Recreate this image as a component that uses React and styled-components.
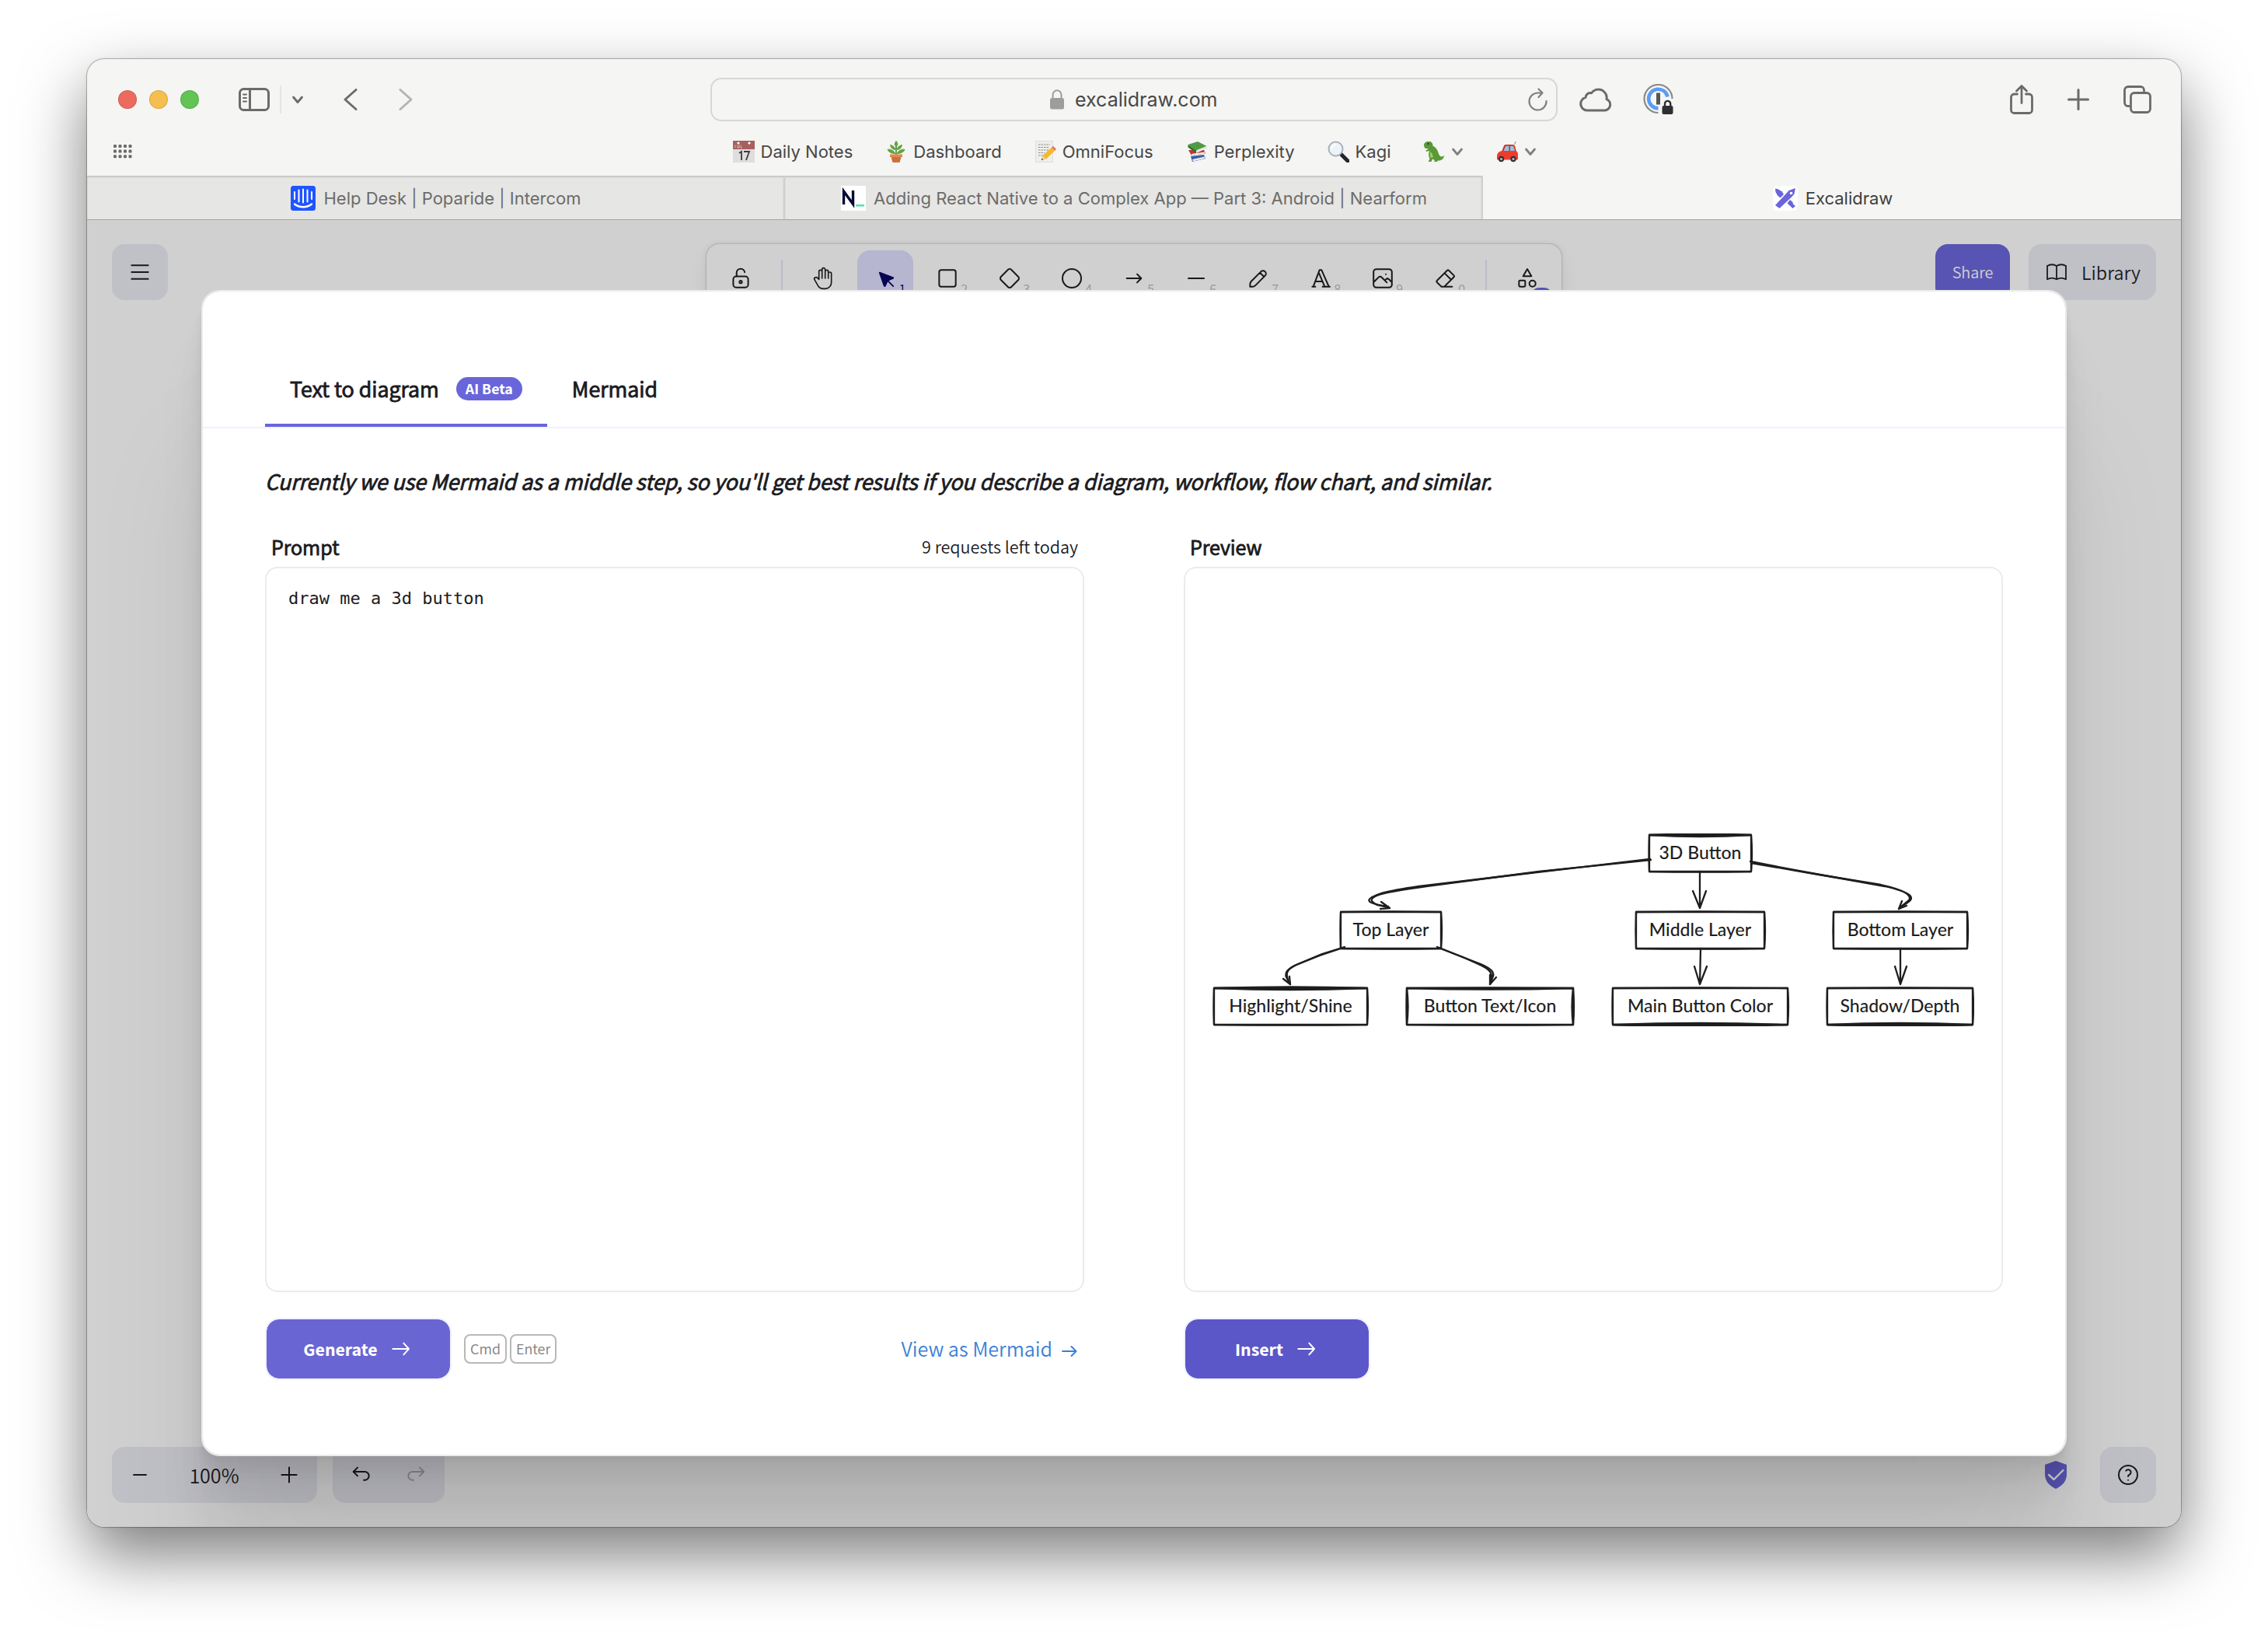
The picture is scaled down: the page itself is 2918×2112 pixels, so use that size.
import React from "react";
import styled, { createGlobalStyle, css } from "styled-components";

const ui = `Inter, "Liberation Sans", sans-serif`;
const brand = `Assistant, "Noto Sans CJK SC", "Open Sans", sans-serif`;
const mono = `"DejaVu Sans Mono", "Liberation Mono", monospace`;
const hand = `Excalifont, Lato, sans-serif`;

const GlobalStyle = createGlobalStyle`
  *, *::before, *::after { box-sizing: border-box; }
  body { margin: 0; background: #fff; font-family: ${ui}; }
  button, input, textarea { font: inherit; color: inherit; margin: 0; padding: 0; border: 0; background: none; }
  a { color: inherit; text-decoration: none; }
  svg { display: block; flex: none; }
`;

/* Adds a little ink so that the regular cut reads as a medium weight. */
const medium = css`
  -webkit-text-stroke: 1px currentColor;
  paint-order: stroke fill;
`;

/* ---------- window ---------- */

const Page = styled.div`
  min-height: 100vh;
  padding: 76px 112px 148px;
  display: flex;
  flex-direction: column;
`;

const Window = styled.div`
  flex: 1;
  display: flex;
  flex-direction: column;
  border-radius: 22px;
  background: #f5f5f3;
  box-shadow: 0 0 0 1px rgba(0, 0, 0, 0.24), 0 0 4px rgba(0, 0, 0, 0.1), 0 36px 84px rgba(0, 0, 0, 0.52);
`;

const Chrome = styled.header`
  color: #6b6b69;
`;

const TitleBar = styled.div`
  display: grid;
  grid-template-columns: minmax(0, 1fr) minmax(400px, 1090px) minmax(0, 1fr);
  align-items: center;
  height: 104px;
`;

const TitleSide = styled.div`
  display: flex;
  align-items: center;
  justify-content: space-between;
  padding: ${(p) => (p.$end ? "0 38px 0 28px" : "0 0 0 40px")};
`;

const Cluster = styled.div`
  display: flex;
  align-items: center;
  gap: ${(p) => p.$gap}px;
`;

const Light = styled.button`
  width: 24px;
  height: 24px;
  border-radius: 50%;
  background: ${(p) => p.$color};
  box-shadow: inset 0 0 0 1px rgba(0, 0, 0, 0.12);
`;

const IconButton = styled.button`
  display: flex;
  color: ${(p) => p.$color || "inherit"};
`;

const Divider = styled.span`
  width: 2px;
  height: 36px;
  background: #e4e4e2;
`;

const AddressBar = styled.form`
  display: grid;
  grid-template-columns: 1fr auto 1fr;
  align-items: center;
  height: 56px;
  padding: 0 10px;
  border: 2px solid #d7d7d5;
  border-radius: 14px;
`;

const Address = styled.label`
  grid-column: 2;
  display: flex;
  align-items: center;
  gap: 14px;
  color: #9d9d9b;
`;

const AddressInput = styled.input`
  width: 184px;
  font-size: 25px;
  line-height: 32px;
  color: #484846;
  outline: none;
`;

const Reload = styled(IconButton)`
  justify-self: end;
  color: #80807e;
`;

const BookmarkBar = styled.nav`
  display: grid;
  grid-template-columns: 1fr auto 1fr;
  align-items: center;
  padding: 0 32px 16px 34px;
`;

const Bookmarks = styled.div`
  display: flex;
  gap: 42px;
`;

const Bookmark = styled.a`
  display: flex;
  align-items: center;
  gap: 8px;
  height: 30px;
  font-size: 22px;
  line-height: 30px;
  color: ${(p) => (p.$folder ? "#80807e" : "#474745")};
`;

const Tabs = styled.div`
  display: grid;
  grid-template-columns: repeat(3, 1fr);
  height: 57px;
  border-bottom: 1px solid #a5a5a5;
`;

const BrowserTab = styled.button`
  display: flex;
  align-items: center;
  justify-content: center;
  gap: 10px;
  padding: 2px 0 0 2px;
  font-size: 22px;
  line-height: 30px;
  ${(p) =>
    p.$active
      ? css`
          color: #3f3f3e;
        `
      : css`
          color: #6c6c6a;
          background: #e6e6e4;
          border-right: 2px solid #d0d0ce;
          box-shadow: inset 0 2px 2px rgba(0, 0, 0, 0.14);
        `}
`;

/* ---------- canvas behind the dialog ---------- */

const Viewport = styled.main`
  position: relative;
  flex: 1;
  display: flex;
  flex-direction: column;
  overflow: hidden;
  border-radius: 0 0 22px 22px;
  background: #fff;
  font-family: ${brand};
  color: #1b1b1f;
`;

const Canvas = styled.div`
  flex: 1;
  display: flex;
  flex-direction: column;
  justify-content: space-between;
  padding: 31px 32px;
`;

const TopBar = styled.div`
  display: grid;
  grid-template-columns: 1fr auto 1fr;
  align-items: start;
`;

const Tile = styled.button`
  display: flex;
  align-items: center;
  justify-content: center;
  width: ${(p) => (p.$wide ? "164px" : "72px")};
  height: 72px;
  gap: 16px;
  border-radius: 16px;
  background: #ececf4;
  font-size: 26px;
`;

const TopActions = styled.div`
  display: flex;
  justify-content: flex-end;
  gap: 24px;
`;

const ShareButton = styled.button`
  width: 96px;
  height: 72px;
  border-radius: 16px;
  background: #6965db;
  color: #fff;
  font-size: 22px;
`;

const ToolIsland = styled.div`
  display: flex;
  align-items: center;
  gap: 8px;
  padding: 8px;
  border-radius: 16px;
  background: #fff;
  box-shadow: 0 0 2px rgba(0, 0, 0, 0.34), 0 0 6px rgba(0, 0, 0, 0.1), 0 14px 28px rgba(0, 0, 0, 0.06);
`;

const ToolDivider = styled.span`
  width: 2px;
  height: 48px;
  margin: 0 8px;
  background: #e5e4f7;
`;

const Tool = styled.button`
  position: relative;
  display: flex;
  align-items: center;
  justify-content: center;
  width: 72px;
  height: 72px;
  border-radius: 16px;
  color: ${(p) => (p.$active ? "#030064" : "#1b1b1f")};
  background: ${(p) => (p.$active ? "#e0dfff" : "transparent")};
`;

const ToolKey = styled.span`
  position: absolute;
  right: 10px;
  bottom: 12px;
  font-size: 18px;
  line-height: 20px;
  color: ${(p) => (p.$active ? "#030064" : "#b8b8b8")};
`;

const ToolBadge = styled.span`
  position: absolute;
  right: 4px;
  bottom: 4px;
  padding: 0 8px;
  border-radius: 10px;
  background: #6965db;
  color: #fff;
  font-size: 14px;
  line-height: 20px;
`;

const BottomBar = styled.div`
  display: flex;
  justify-content: space-between;
  align-items: center;
`;

const Pill = styled.div`
  display: flex;
  align-items: center;
  border-radius: 16px;
  background: #ececf4;
`;

const PillButton = styled.button`
  display: flex;
  align-items: center;
  justify-content: center;
  width: 72px;
  height: 72px;
  opacity: ${(p) => (p.disabled ? 0.3 : 1)};
`;

const ZoomValue = styled.button`
  width: 120px;
  font-size: 28px;
  text-align: center;
`;

/* ---------- dialog ---------- */

const Overlay = styled.div`
  position: absolute;
  inset: 0;
  display: flex;
  padding: 90px 147px 91px;
  background: rgba(18, 18, 18, 0.2);
`;

const Dialog = styled.section`
  flex: 1;
  display: flex;
  flex-direction: column;
  border: 2px solid #ebebeb;
  background-clip: padding-box;
  border-radius: 24px;
  background-color: #fff;
  padding-top: 80px;
  box-shadow: 0 200px 160px rgba(0, 0, 0, 0.07), 0 84px 67px rgba(0, 0, 0, 0.05), 0 45px 36px rgba(0, 0, 0, 0.042),
    0 25px 20px rgba(0, 0, 0, 0.035), 0 13px 11px rgba(0, 0, 0, 0.028), 0 6px 4px rgba(0, 0, 0, 0.02);
`;

const DialogTabs = styled.div`
  display: flex;
  padding: 0 80px;
  border-bottom: 2px solid #f1f0ff;
`;

const DialogTab = styled.button`
  display: flex;
  align-items: center;
  gap: 22px;
  height: 94px;
  padding: 0 32px;
  border-bottom: 4px solid ${(p) => (p.$active ? "#6965db" : "transparent")};
  font-size: 30px;
`;

const TabLabel = styled.span`
  ${medium}
`;

const Beta = styled.span`
  padding: 0 12px;
  border-radius: 15px;
  background: #6965db;
  color: #fff;
  font-size: 20px;
  font-weight: 700;
  line-height: 30px;
`;

const DialogBody = styled.div`
  flex: 1;
  display: flex;
  flex-direction: column;
  padding: 48px 80px 96px;
`;

const Hint = styled.p`
  margin: 0 0 45px;
  font-size: 30px;
  line-height: 40px;
  font-style: italic;
  ${medium}
`;

const Panels = styled.div`
  flex: 1;
  display: grid;
  grid-template-columns: 1fr 1fr;
  gap: 128px;
`;

const Panel = styled.div`
  display: flex;
  flex-direction: column;
`;

const PanelHead = styled.div`
  display: flex;
  justify-content: space-between;
  align-items: center;
  height: 45px;
  padding: 0 8px 7px;
  font-size: 24px;
`;

const PanelTitle = styled.label`
  font-size: 28px;
  font-weight: 400;
  ${medium}
`;

const frame = css`
  flex: 1;
  border: 2px solid #ebebeb;
  border-radius: 16px;
`;

const Prompt = styled.textarea`
  ${frame}
  padding: 24px 28px;
  resize: none;
  outline: none;
  font-family: ${mono};
  font-size: 22px;
  line-height: 30px;
`;

const Preview = styled.div`
  ${frame}
  display: flex;
  align-items: center;
  justify-content: center;
  padding: 34px;
`;

const PanelFoot = styled.div`
  display: flex;
  align-items: center;
  gap: 16px;
  padding-top: 33px;
`;

const Primary = styled.button`
  display: flex;
  align-items: center;
  justify-content: center;
  gap: 14px;
  width: 240px;
  height: 80px;
  border: 2px solid #f1f0ff;
  border-radius: 18px;
  background: ${(p) => (p.$deep ? "#5b57c9" : "#6965d3")};
  background-clip: padding-box;
  color: #fff;
  font-size: 24px;
  font-weight: 700;
`;

const Keys = styled.div`
  display: flex;
  gap: 4px;
`;

const Key = styled.kbd`
  padding: 0 6px;
  border: 2px solid #b8b8b8;
  border-radius: 8px;
  font-family: ${brand};
  font-size: 20px;
  line-height: 34px;
  color: #808080;
`;

const MermaidLink = styled.a`
  display: flex;
  align-items: center;
  gap: 12px;
  margin-left: auto;
  padding-right: 9px;
  font-size: 28px;
  line-height: 40px;
  color: #3b7fd6;
`;

const Diagram = styled.svg`
  width: 100%;
  max-width: 980px;
  height: auto;
  color: #1e1e1e;
`;

const NodeLabel = styled.text`
  font-family: ${hand};
  font-size: 23px;
  font-weight: 500;
  text-anchor: middle;
  fill: currentColor;
`;

/* ---------- icons ---------- */

function Glyph({ box = 24, size = 32, width = 1.5, children, ...rest }) {
  return (
    <svg
      viewBox={`0 0 ${box} ${box}`}
      width={size}
      height={size}
      fill="none"
      stroke="currentColor"
      strokeWidth={width}
      strokeLinecap="round"
      strokeLinejoin="round"
      aria-hidden="true"
      {...rest}
    >
      {children}
    </svg>
  );
}

function Line({ w, h, sw = 3, d, children }) {
  return (
    <svg
      viewBox={`0 0 ${w} ${h}`}
      width={w}
      height={h}
      fill="none"
      stroke="currentColor"
      strokeWidth={sw}
      strokeLinecap="round"
      strokeLinejoin="round"
      aria-hidden="true"
    >
      {d && <path d={d} />}
      {children}
    </svg>
  );
}

const ChevronDown = () => <Line w={16} h={12} sw={2.8} d="M2.500 3l5.500 6.500L13.500 3" />;

const Arrow = ({ size = 32 }) => (
  <Glyph box={24} size={size} width={1.5}>
    <path d="M4 12h15.500M14.500 6.500l5 5.500-5 5.500" />
  </Glyph>
);

const SmallArrow = () => <Line w={20} h={28} sw={2} d="M1 17h17M12.500 11l6 6-6 6" />;

const SidebarIcon = () => (
  <Line w={40} h={30} sw={3}>
    <rect x="1.500" y="1.500" width="37" height="27" rx="5" />
    <path d="M14.500 2v26" />
    <path d="M6 8.500h4M6 13h4M6 17.500h4" strokeWidth="2" />
  </Line>
);

const AppsIcon = () => (
  <svg viewBox="0 0 24 18" width="24" height="18" fill="currentColor" aria-hidden="true">
    {[0, 1, 2].flatMap((r) =>
      [0, 1, 2, 3].map((c) => <rect key={`${r}${c}`} x={c * 6.5} y={r * 6.6} width="4" height="4" rx="1.200" />)
    )}
  </svg>
);

const LockIcon = () => (
  <svg viewBox="0 0 18 26" width="18" height="26" fill="none" stroke="currentColor" aria-hidden="true">
    <rect x="0" y="11" width="18" height="14.500" rx="2.500" fill="currentColor" stroke="none" />
    <path d="M3.500 12V7a5.500 5.700 0 0 1 11 0v5" strokeWidth="2" />
  </svg>
);

const ReloadIcon = () => <Line w={26} h={30} sw={2.2} d="M23.500 17A11 11 0 1 1 12.500 6.500h5M13.500 1.500l5 5-5 5.500" />;

const CloudIcon = () => (
  <Line w={42} h={32} d="M10 30a8.500 8.500 0 0 1-2-16.700 6 6 0 0 1 7.500-5.500A10.700 10.700 0 0 1 35 15.600 7.500 7.500 0 0 1 33 30z" />
);

const PasswordIcon = () => (
  <svg viewBox="0 0 40 40" width="40" height="40" fill="none" aria-hidden="true">
    <path d="M37.500 19A18 18 0 1 0 19.500 37" stroke="#8a8a89" strokeWidth="2.200" />
    <path d="M31.500 16.500A12.300 12.300 0 1 0 19.500 31.300" stroke="#5b9df5" strokeWidth="4.600" />
    <rect x="17" y="11.500" width="5" height="15" fill="#555" />
    <rect x="24.500" y="28" width="14" height="11" rx="2" fill="#2f2f2f" />
    <path d="M28 29v-3.500a3.600 3.600 0 0 1 7.200 0V29" stroke="#2f2f2f" strokeWidth="2.400" />
  </svg>
);

const ShareIcon = () => (
  <Line w={30} h={38} sw={2.8} d="M9.500 12H5.500a4 4 0 0 0-4 4v16.500a4 4 0 0 0 4 4h19a4 4 0 0 0 4-4V16a4 4 0 0 0-4-4h-4M15 23.500V2M8.500 8L15 1.500 21.500 8" />
);

const PlusIcon = () => <Line w={28} h={28} d="M14 1.500v25M1.500 14h25" />;

const TabsIcon = () => (
  <Line w={36} h={36} sw={2.8}>
    <rect x="9.500" y="9.500" width="25" height="25" rx="4.500" />
    <path d="M7 26.500H6A4.500 4.500 0 0 1 1.500 22V6A4.500 4.500 0 0 1 6 1.500h16A4.500 4.500 0 0 1 26.500 6v1" />
  </Line>
);

const Emoji = ({ children }) => (
  <svg viewBox="0 0 28 28" width="28" height="28" aria-hidden="true">
    {children}
  </svg>
);

const Calendar = () => (
  <Emoji>
    <rect x="0" y="0" width="28" height="28" fill="#dedede" />
    <rect x="0" y="0" width="28" height="11" fill="#a8605f" />
    <circle cx="7" cy="3" r="1.600" fill="#fff" />
    <circle cx="21" cy="3" r="1.600" fill="#fff" />
    <path d="M3 5.500v3.500M6 5.500v3.500h2V5.500M10 5.500v3.500h2" stroke="#d9b3b2" fill="none" />
    <path d="M8 16l3-2v11M14 14h7l-4 11" stroke="#3c3c3c" strokeWidth="1.800" fill="none" />
  </Emoji>
);

const Plant = () => (
  <Emoji>
    <path d="M14 19V4" stroke="#4c8a35" strokeWidth="1.600" />
    <path d="M14 8c-3-2-3-5 0-8 3 3 3 6 0 8zM13.500 12C9 12 6.500 9 6 5c4 .5 7 3 7.500 7zM14.500 12c4.500 0 7-3 7.500-7-4 .5-7 3-7.500 7zM13.500 17C8 17 4 15 2.500 11c5-1 9 1.500 11 6zM14.500 17c5.500 0 9.500-2 11-6-5-1-9 1.500-11 6z" fill="#63a544" />
    <path d="M6 17.500h16v3.500H6z" fill="#e2894f" />
    <path d="M7.500 21h13L18.500 28h-9z" fill="#c9713c" />
  </Emoji>
);

const Memo = () => (
  <Emoji>
    <rect x="1.500" y="0.500" width="22" height="27" fill="#eeeeec" stroke="#dededc" />
    <path d="M5 5h15M5 8.500h13M5 12h14M5 15.500h8M5 19h6" stroke="#8e8e8c" strokeWidth="1.200" strokeDasharray="2.500 1" />
    <path d="M9 25l1.500-6L22 8.500l4.500 4L15 23.500z" fill="#f3b92f" />
    <path d="M22 8.500l2-1.500 4 4-1.500 1.500z" fill="#e0647a" />
    <path d="M9 25l1.500-6 4.500 4.500z" fill="#e8cfa2" />
    <path d="M9 25l.6-2.200 1.600 1.600z" fill="#333" />
  </Emoji>
);

const Books = () => (
  <Emoji>
    <path d="M6 20l17-2 2 5-17 4z" fill="#3b5fa8" />
    <path d="M8 24l16-3.500v2.500L9 26.500z" fill="#e9e9e9" />
    <path d="M3 12l4 7 18-2.500-2-4.500z" fill="#c5342f" />
    <path d="M7 17l17-2.500v2L7.500 19z" fill="#f0f0f0" />
    <path d="M2.500 5L15 1l11.500 6L13 12.500z" fill="#4f9a45" />
    <path d="M2.500 5v3.500L13 16v-3.500z" fill="#2f7030" />
    <path d="M13 12.500L26.500 7v3L13 16z" fill="#e4e8da" />
  </Emoji>
);

const Magnifier = () => (
  <Emoji>
    <path d="M17 17l9 9" stroke="#23272d" strokeWidth="5" strokeLinecap="round" />
    <circle cx="10.500" cy="10.500" r="9" fill="#eef3f7" stroke="#a9b1ba" strokeWidth="2" />
    <path d="M5.500 10a5 5 0 0 1 5-5" stroke="#fff" strokeWidth="2" fill="none" />
  </Emoji>
);

const Dino = () => (
  <Emoji>
    <path d="M1 6c0-3 2.500-5 6-5 4 0 5.500 2 5.500 5.500 4 2 6.500 6 7.500 10.500 1.500 3.500 4 4.500 7 2-.5 4.500-3.500 7-8 6.500L18 27h-4l1-2-3-1.500L10.500 27H6.500l2-3.500C6.500 20 7 16 8 13l-4 1-.5-1.500L7 10.500 2 9.500z" fill="#5a9a36" />
    <path d="M9.500 14c-1 3-1 6 .5 8l3-1c-1-2-1-5-3.500-7z" fill="#a7c96b" />
    <circle cx="6.500" cy="4" r="1.100" fill="#222" />
  </Emoji>
);

const Car = () => (
  <Emoji>
    <path d="M7 14L10 6.500C10.500 5.500 11.500 5 12.500 5H21c1.500 0 2.500.8 3 2l2 7z" fill="#d9291f" />
    <path d="M9.500 13l2.300-5.500c.2-.5.6-.8 1.200-.8h3.500V13zM18 6.700h3c.8 0 1.300.4 1.500 1l1.500 5.300h-6z" fill="#8ec7dd" />
    <path d="M1 20c0-4 2.500-6.500 7-7h17c2 .5 3 2.500 3 5v5c0 .8-.5 1.500-1.500 1.500H2c-.8 0-1-.5-1-1.300z" fill="#ef3b2d" />
    <circle cx="6.500" cy="23.500" r="3.700" fill="#333" />
    <circle cx="6.500" cy="23.500" r="1.600" fill="#bbb" />
    <circle cx="22" cy="23.500" r="3.700" fill="#333" />
    <circle cx="22" cy="23.500" r="1.600" fill="#bbb" />
    <path d="M23.500 5l1.500-4" stroke="#888" />
  </Emoji>
);

const Favicon = ({ children }) => (
  <svg viewBox="0 0 32 32" width="32" height="32" aria-hidden="true">
    {children}
  </svg>
);

const IntercomIcon = () => (
  <Favicon>
    <rect width="32" height="32" rx="3.500" fill="#1f55ff" />
    <g stroke="#fff" strokeWidth="2" strokeLinecap="round" fill="none">
      <path d="M5 8v9M10.500 5.500v15M16 4.500v17M21.500 5.500v15M27 8v9" />
      <path d="M5 23.500c6 5 16 5 22 0" strokeWidth="2.400" />
    </g>
  </Favicon>
);

const NearformIcon = () => (
  <Favicon>
    <rect width="32" height="32" fill="#fff" />
    <path d="M3.500 24V7l12 16.500V6" fill="none" stroke="#050a35" strokeWidth="3.400" />
    <rect x="19" y="24" width="11" height="2.600" fill="#5fe0b0" />
  </Favicon>
);

const ExcalidrawIcon = () => (
  <Favicon>
    <rect width="32" height="32" rx="5" fill="#fff" />
    <g fill="#6965db">
      <path d="M3 3.500l3.500.8 5 3L14 11l-4.500 4.500L6 12.500 3.500 8z" />
      <path d="M29 3l-8.500 3-2.500 3L3 25l5.500 4L24 14.500l3.500-4z" />
      <path d="M22 18l3.500 3 .5 2.500 3 2.500-3.500 3L18.500 22.500z" />
    </g>
    <circle cx="23.500" cy="9.500" r="1.800" fill="#fff" />
  </Favicon>
);

const ShieldIcon = () => (
  <svg viewBox="0 0 30 36" width="30" height="36" aria-hidden="true">
    <path d="M15 0l14 5v12.500C29 26 23 32.500 15 36 7 32.500 1 26 1 17.500V5z" fill="#6965db" />
    <path d="M6 18l6.500 6L24.500 12" fill="none" stroke="#fff" strokeWidth="2.400" strokeLinecap="round" strokeLinejoin="round" />
  </svg>
);

const UndoPath = () => <path d="M7.500 10.833 4.167 7.500 7.500 4.167M4.167 7.500h9.166a3.333 3.333 0 0 1 0 6.667H12.500" />;

const tools = [
  { name: "Hand", icon: <Glyph width={1.25}><path d="M8 13V5.500a1.500 1.500 0 0 1 3 0V12M11 5.500v-2a1.500 1.500 0 1 1 3 0V12M14 5.500a1.500 1.500 0 0 1 3 0V12M17 7.500a1.500 1.500 0 0 1 3 0V16a6 6 0 0 1-6 6h-2 .208a6 6 0 0 1-5.012-2.700L7 19c-.312-.479-1.407-2.388-3.286-5.728a1.500 1.500 0 0 1 .536-2.022 1.867 1.867 0 0 1 2.280.280L8 13" /></Glyph> },
  { name: "Selection", key: "1", active: true, icon: <Glyph box={22} width={1.25}><path fill="currentColor" d="M6 6l4.153 11.793a.365.365 0 0 0 .331.207.366.366 0 0 0 .332-.207L13 13l4.787-1.994c.13-.06.213-.19.213-.332a.366.366 0 0 0-.213-.332L6 6Z" /><path d="M13.500 13.500L18 18" /></Glyph> },
  { name: "Rectangle", key: "2", icon: <Glyph><rect x="4" y="4" width="16" height="16" rx="2" /></Glyph> },
  { name: "Diamond", key: "3", icon: <Glyph><path d="M10.500 20.400l-6.900-6.900c-.781-.781-.781-2.219 0-3l6.900-6.900c.781-.781 2.219-.781 3 0l6.900 6.900c.781.781.781 2.219 0 3l-6.900 6.900c-.781.781-2.219.781-3 0z" /></Glyph> },
  { name: "Ellipse", key: "4", icon: <Glyph><circle cx="12" cy="12" r="9" /></Glyph> },
  { name: "Arrow", key: "5", icon: <Glyph><path d="M5 12h14M15 16l4-4M15 8l4 4" /></Glyph> },
  { name: "Line", key: "6", icon: <Glyph><path d="M4.500 12h15" /></Glyph> },
  { name: "Draw", key: "7", icon: <Glyph box={20} width={1.25}><path d="m7.643 15.690 7.774-7.773a2.357 2.357 0 1 0-3.334-3.334L4.310 12.357a3.333 3.333 0 0 0-.977 2.357v1.953h1.953c.884 0 1.732-.352 2.357-.977ZM11.250 5.417l3.333 3.333" /></Glyph> },
  { name: "Text", key: "8", icon: <Glyph><path d="M4 20h3M14 20h7M6.900 15h6.900M10.200 6.300L16 20M5 20l6-16h2l7 16" /></Glyph> },
  { name: "Image", key: "9", icon: <Glyph box={20} width={1.25}><path d="M12.500 6.667h.01M4.910 2.625h10.180a2.284 2.284 0 0 1 2.285 2.284v10.182a2.284 2.284 0 0 1-2.284 2.284H4.909a2.284 2.284 0 0 1-2.284-2.284V4.909a2.284 2.284 0 0 1 2.284-2.284ZM3.333 12.500l3.334-3.333c.773-.745 1.726-.745 2.500 0l4.166 4.166M11.667 11.667l.833-.834c.774-.744 1.726-.744 2.500 0l1.667 1.667" /></Glyph> },
  { name: "Eraser", key: "0", icon: <Glyph><path d="M19 20H8.500l-4.210-4.300a1 1 0 0 1 0-1.410l10-10a1 1 0 0 1 1.410 0l5 5a1 1 0 0 1 0 1.410L11.500 20M18 13.300L11.700 7" /></Glyph> },
];

const bookmarks = [
  { label: "Daily Notes", icon: <Calendar /> },
  { label: "Dashboard", icon: <Plant /> },
  { label: "OmniFocus", icon: <Memo /> },
  { label: "Perplexity", icon: <Books /> },
  { label: "Kagi", icon: <Magnifier /> },
  { name: "Dinosaur folder", icon: <Dino /> },
  { name: "Car folder", icon: <Car /> },
];

/* ---------- diagram ---------- */

const nodes = [
  { label: "3D Button", x: 562, y: 2, w: 131, heavy: "top" },
  { label: "Top Layer", x: 165, y: 101, w: 129 },
  { label: "Middle Layer", x: 545, y: 101, w: 165 },
  { label: "Bottom Layer", x: 799, y: 101, w: 172 },
  { label: "Highlight/Shine", x: 2, y: 199, w: 197, heavy: "top" },
  { label: "Button Text/Icon", x: 250, y: 199, w: 214, heavy: "sides" },
  { label: "Main Button Color", x: 515, y: 199, w: 225, heavy: "bottom" },
  { label: "Shadow/Depth", x: 791, y: 199, w: 187, heavy: "bottom" },
];

const edges = [
  "M563 33L434 48 266 68Q232 73 217 77C196 84 200 88 207 90L228 96",
  "M564 34L420 49 290 66Q228 74 214 79C200 84 204 88 212 92L226 94M217 88l11 8-12 1",
  "M692 36L754 48 865 68C896 75 906 82 894 89L883 97",
  "M693 38L780 53 860 66C892 73 900 80 896 86L885 95M887 87l-4 10 10-4",
  "M627 49L627 96M618 74L627 96M635 74L627 96",
  "M628 148L627 194M620 171L627 194M636 171L627 194",
  "M885 148L885 194M878 171L885 194M893 171L885 194",
  "M170 146L141 155 110 168C95 174 93 180 95 185L100 194",
  "M168 147L138 157 108 169C93 176 95 182 97 188M91 187l9 7-1-10",
  "M289 146L319 158 345 168C362 175 363 181 360 186L357 194",
  "M291 147L322 159 342 168C358 175 360 180 359 188M365 185l-8 9 0-12",
];

function NodeBox({ x, y, w, heavy }) {
  const h = 47;
  const r = x + w;
  const b = y + h;
  const m = x + w / 2;
  return (
    <>
      <path d={`M${x} ${y}L${r} ${y}L${r} ${b}L${x} ${b}Z`} />
      <path d={`M${x} ${y}Q${m} ${y - 1} ${r} ${y}Q${r + 2} ${y + 24} ${r} ${b}Q${m} ${b + 1} ${x} ${b}Q${x - 1} ${y + 24} ${x} ${y}`} />
      {heavy === "top" && <path d={`M${x} ${y}Q${m} ${y + 4} ${r} ${y}Q${m} ${y - 3} ${x} ${y}`} />}
      {heavy === "bottom" && <path d={`M${x} ${b}Q${m} ${b + 4} ${r} ${b}Q${m} ${b - 4} ${x} ${b}`} />}
      {heavy === "sides" && <path d={`M${x} ${y}Q${x + 3} ${y + 24} ${x} ${b}M${r} ${y}Q${r - 3} ${y + 24} ${r} ${b}M${x} ${y}Q${m} ${y + 3} ${r} ${y}`} />}
    </>
  );
}

function FlowChart() {
  return (
    <Diagram viewBox="0 0 980 248" role="img" aria-label="3D Button flow chart">
      <g fill="none" stroke="currentColor" strokeWidth="2.300" strokeLinecap="round" strokeLinejoin="round">
        {edges.map((d) => (
          <path key={d} d={d} />
        ))}
        {nodes.map((n) => (
          <NodeBox key={n.label} {...n} />
        ))}
      </g>
      {nodes.map((n) => (
        <NodeLabel key={n.label} x={n.x + n.w / 2} y={n.y + 31}>
          {n.label}
        </NodeLabel>
      ))}
    </Diagram>
  );
}

/* ---------- app ---------- */

function BrowserChrome() {
  return (
    <Chrome>
      <TitleBar>
        <TitleSide>
          <Cluster $gap={51}>
            <Cluster $gap={16}>
              <Light $color="#ed6a5f" aria-label="Close" />
              <Light $color="#f5bf4f" aria-label="Minimize" />
              <Light $color="#61c454" aria-label="Zoom" />
            </Cluster>
            <Cluster $gap={13}>
              <IconButton aria-label="Show sidebar"><SidebarIcon /></IconButton>
              <Divider />
              <IconButton aria-label="Tab groups"><ChevronDown /></IconButton>
            </Cluster>
            <Cluster $gap={53}>
              <IconButton aria-label="Back"><Line w={18} h={28} d="M16 1.500L2 14l14 12.500" /></IconButton>
              <IconButton aria-label="Forward" $color="#b4b4b2"><Line w={18} h={28} d="M2 1.500L16 14 2 26.500" /></IconButton>
            </Cluster>
          </Cluster>
        </TitleSide>
        <AddressBar onSubmit={(e) => e.preventDefault()}>
          <Address>
            <LockIcon />
            <AddressInput aria-label="Address" defaultValue="excalidraw.com" />
          </Address>
          <Reload type="button" aria-label="Reload"><ReloadIcon /></Reload>
        </AddressBar>
        <TitleSide $end>
          <Cluster $gap={40}>
            <IconButton aria-label="iCloud tabs"><CloudIcon /></IconButton>
            <IconButton aria-label="Password manager"><PasswordIcon /></IconButton>
          </Cluster>
          <Cluster $gap={44}>
            <IconButton aria-label="Share page"><ShareIcon /></IconButton>
            <IconButton aria-label="New tab"><PlusIcon /></IconButton>
            <IconButton aria-label="Tab overview"><TabsIcon /></IconButton>
          </Cluster>
        </TitleSide>
      </TitleBar>
      <BookmarkBar>
        <IconButton aria-label="Favorites"><AppsIcon /></IconButton>
        <Bookmarks>
          {bookmarks.map((b) => (
            <Bookmark key={b.label || b.name} href="#" aria-label={b.name} $folder={!b.label}>
              {b.icon}
              {b.label || <ChevronDown />}
            </Bookmark>
          ))}
        </Bookmarks>
      </BookmarkBar>
      <Tabs>
        <BrowserTab><IntercomIcon />Help Desk | Poparide | Intercom</BrowserTab>
        <BrowserTab><NearformIcon />Adding React Native to a Complex App — Part 3: Android | Nearform</BrowserTab>
        <BrowserTab $active><ExcalidrawIcon />Excalidraw</BrowserTab>
      </Tabs>
    </Chrome>
  );
}

function Workspace() {
  return (
    <Canvas>
      <TopBar>
        <Tile aria-label="Menu"><Glyph><path d="M4 5.500h16M4 12h16M4 18.500h16" /></Glyph></Tile>
        <ToolIsland>
          <Tool aria-label="Keep tool active">
            <Glyph box={20} width={1.25}>
              <rect x="4" y="8.500" width="12" height="8.800" rx="2.300" />
              <circle cx="10" cy="12.900" r="1" />
              <path d="M6.700 8.300V5.200A3.200 3.200 0 0 1 10 2.300a3.200 3.200 0 0 1 3.200 2.800" />
            </Glyph>
          </Tool>
          <ToolDivider />
          {tools.map((t) => (
            <Tool key={t.name} aria-label={t.name} $active={t.active}>
              {t.icon}
              {t.key && <ToolKey $active={t.active}>{t.key}</ToolKey>}
            </Tool>
          ))}
          <ToolDivider />
          <Tool aria-label="More tools">
            <Glyph>
              <path d="M12 3l-4 7h8z" />
              <circle cx="17" cy="17" r="3" />
              <rect x="4" y="14" width="6" height="6" rx="1" />
            </Glyph>
            <ToolBadge>AI</ToolBadge>
          </Tool>
        </ToolIsland>
        <TopActions>
          <ShareButton>Share</ShareButton>
          <Tile $wide>
            <Glyph width={1.35}>
              <path d="M3 19a9 9 0 0 1 9 0 9 9 0 0 1 9 0M3 6a9 9 0 0 1 9 0 9 9 0 0 1 9 0M3 6v13M12 6v13M21 6v13" />
            </Glyph>
            Library
          </Tile>
        </TopActions>
      </TopBar>
      <BottomBar>
        <Cluster $gap={20}>
          <Pill>
            <PillButton aria-label="Zoom out"><Glyph box={20} width={1.25}><path d="M5 10h10" /></Glyph></PillButton>
            <ZoomValue>100%</ZoomValue>
            <PillButton aria-label="Zoom in"><Glyph box={20} width={1.25}><path d="M10 4v12M4 10h12" /></Glyph></PillButton>
          </Pill>
          <Pill>
            <PillButton aria-label="Undo"><Glyph box={20} width={1.25}><UndoPath /></Glyph></PillButton>
            <PillButton aria-label="Redo" disabled>
              <Glyph box={20} width={1.25}><g transform="matrix(-1 0 0 1 20 0)"><UndoPath /></g></Glyph>
            </PillButton>
          </Pill>
        </Cluster>
        <Cluster $gap={42}>
          <ShieldIcon />
          <Tile aria-label="Help">
            <Glyph><circle cx="12" cy="12" r="9" /><path d="M12 17v.01M12 13.500a1.500 1.500 0 0 1 1-1.500 2.600 2.600 0 1 0-3-4" /></Glyph>
          </Tile>
        </Cluster>
      </BottomBar>
    </Canvas>
  );
}

function DiagramDialog() {
  return (
    <Overlay>
      <Dialog role="dialog" aria-label="Text to diagram">
        <DialogTabs role="tablist">
          <DialogTab role="tab" aria-selected="true" $active>
            <TabLabel>Text to diagram</TabLabel>
            <Beta>AI Beta</Beta>
          </DialogTab>
          <DialogTab role="tab" aria-selected="false">
            <TabLabel>Mermaid</TabLabel>
          </DialogTab>
        </DialogTabs>
        <DialogBody>
          <Hint>
            Currently we use Mermaid as a middle step, so you'll get best results if you describe a diagram, workflow, flow
            chart, and similar.
          </Hint>
          <Panels>
            <Panel>
              <PanelHead>
                <PanelTitle htmlFor="prompt">Prompt</PanelTitle>
                <span>9 requests left today</span>
              </PanelHead>
              <Prompt id="prompt" spellCheck={false} defaultValue="draw me a 3d button" />
              <PanelFoot>
                <Primary>Generate <Arrow /></Primary>
                <Keys>
                  <Key>Cmd</Key>
                  <Key>Enter</Key>
                </Keys>
                <MermaidLink href="#">View as Mermaid <SmallArrow /></MermaidLink>
              </PanelFoot>
            </Panel>
            <Panel>
              <PanelHead>
                <PanelTitle as="h3">Preview</PanelTitle>
              </PanelHead>
              <Preview><FlowChart /></Preview>
              <PanelFoot>
                <Primary $deep>Insert <Arrow /></Primary>
              </PanelFoot>
            </Panel>
          </Panels>
        </DialogBody>
      </Dialog>
    </Overlay>
  );
}

export default function App() {
  return (
    <Page>
      <GlobalStyle />
      <Window>
        <BrowserChrome />
        <Viewport>
          <Workspace />
          <DiagramDialog />
        </Viewport>
      </Window>
    </Page>
  );
}
